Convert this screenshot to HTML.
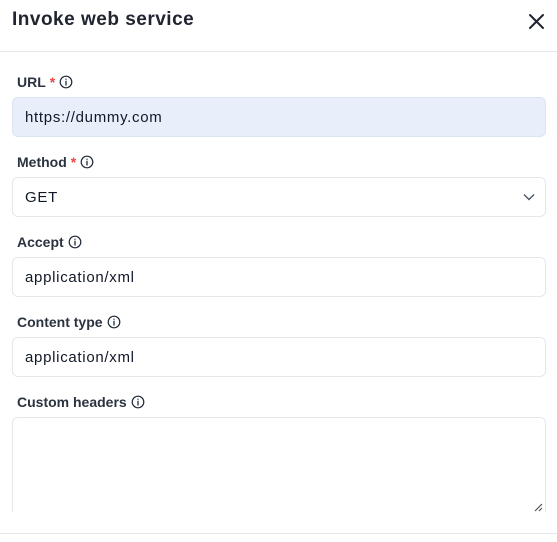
<!DOCTYPE html>
<html><head><style>
body{margin:0;width:557px;height:542px;background:#fff;font-family:"Liberation Sans",sans-serif;position:relative;overflow:hidden;color:#111827}
.h{position:absolute;left:12px;top:9px;font-size:19px;font-weight:bold;color:#1f2430;letter-spacing:0.5px}
.x{position:absolute;left:528px;top:13px}
.div{position:absolute;left:0;right:0;top:51px;border-top:1px solid #e5e7eb}
.lab{position:absolute;left:17px;font-size:14px;font-weight:bold;color:#2b3340;display:flex;align-items:center;gap:4px}
.lab .s{color:#ef4444}
.inp{position:absolute;left:12px;height:38px;border:1px solid #e5e7eb;border-radius:6px;font-size:15px;letter-spacing:0.7px;line-height:40px;padding-left:12px;box-sizing:content-box;width:520px;color:#111827}
.clip{position:absolute;left:0;top:0;width:557px;height:512px;overflow:hidden}
.bot{position:absolute;left:0;right:0;top:533px;border-top:1px solid #e5e7eb}
</style></head><body>
<div class="h">Invoke web service</div>
<svg class="x" width="17" height="17" viewBox="0 0 17 17"><path d="M2 2L15 15M15 2L2 15" stroke="#1f2430" stroke-width="2" stroke-linecap="round"/></svg>
<div class="div"></div>
<div class="clip">
<div class="lab" style="top:74px">URL<span class="s">*</span><svg width="14" height="14" viewBox="0 0 14 14"><circle cx="7" cy="7" r="5.8" fill="none" stroke="#1f2937" stroke-width="1.2"/><path d="M7 6.3V10M7 4.2v.1" stroke="#1f2937" stroke-width="1.3" stroke-linecap="round"/></svg></div>
<div class="inp" style="top:97px;background:#e8effb;border-color:#dbe4f3">https://dummy.com</div>
<div class="lab" style="top:154px">Method<span class="s">*</span><svg width="14" height="14" viewBox="0 0 14 14"><circle cx="7" cy="7" r="5.8" fill="none" stroke="#1f2937" stroke-width="1.2"/><path d="M7 6.3V10M7 4.2v.1" stroke="#1f2937" stroke-width="1.3" stroke-linecap="round"/></svg></div>
<div class="inp" style="top:177px">GET<svg style="position:absolute;right:10px;top:15px" width="12" height="8" viewBox="0 0 12 8"><path d="M1 1.5L6 6.5L11 1.5" fill="none" stroke="#4b5563" stroke-width="1.4"/></svg></div>
<div class="lab" style="top:234px">Accept<svg width="14" height="14" viewBox="0 0 14 14"><circle cx="7" cy="7" r="5.8" fill="none" stroke="#1f2937" stroke-width="1.2"/><path d="M7 6.3V10M7 4.2v.1" stroke="#1f2937" stroke-width="1.3" stroke-linecap="round"/></svg></div>
<div class="inp" style="top:257px">application/xml</div>
<div class="lab" style="top:314px">Content type<svg width="14" height="14" viewBox="0 0 14 14"><circle cx="7" cy="7" r="5.8" fill="none" stroke="#1f2937" stroke-width="1.2"/><path d="M7 6.3V10M7 4.2v.1" stroke="#1f2937" stroke-width="1.3" stroke-linecap="round"/></svg></div>
<div class="inp" style="top:337px">application/xml</div>
<div class="lab" style="top:394px">Custom headers<svg width="14" height="14" viewBox="0 0 14 14"><circle cx="7" cy="7" r="5.8" fill="none" stroke="#1f2937" stroke-width="1.2"/><path d="M7 6.3V10M7 4.2v.1" stroke="#1f2937" stroke-width="1.3" stroke-linecap="round"/></svg></div>
<div class="inp" style="top:417px;height:120px"></div>
<svg style="position:absolute;left:534px;top:503px" width="9" height="9" viewBox="0 0 9 9"><path d="M1 8L8 1M5 8L8 5" stroke="#555" stroke-width="1.2"/></svg>
</div>
<div class="bot"></div>
</body></html>
